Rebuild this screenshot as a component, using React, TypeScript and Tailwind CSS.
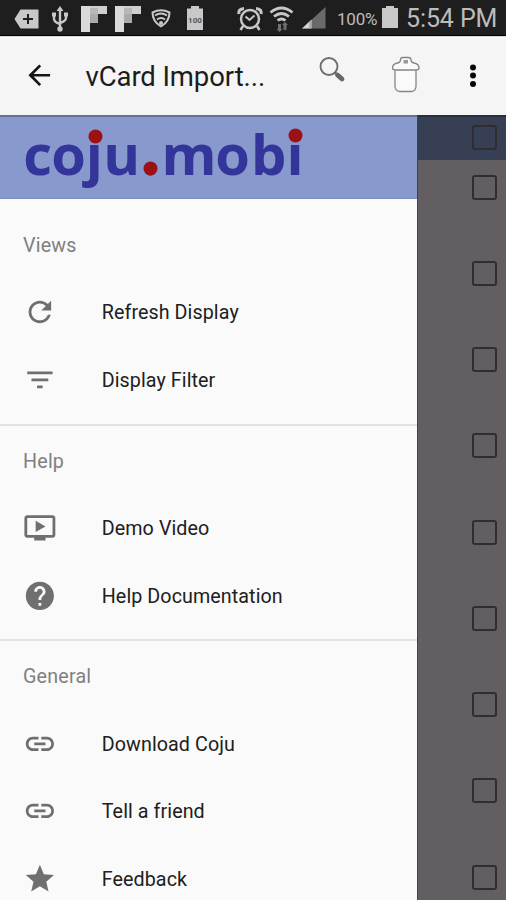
import type { ReactNode } from "react";

function Icon({ d }: { d: string }) {
  return (
    <svg viewBox="0 0 24 24" className="mb-[1.5px] size-[33.75px] shrink-0" fill="#6f6f6f">
      <path d={d} />
    </svg>
  );
}

const refresh =
  "M17.65 6.35C16.2 4.9 14.21 4 12 4c-4.42 0-7.99 3.58-7.99 8s3.57 8 7.99 8c3.73 0 6.84-2.55 7.73-6h-2.08c-.82 2.33-3.04 4-5.65 4-3.31 0-6-2.69-6-6s2.69-6 6-6c1.66 0 3.14.69 4.22 1.78L13 11h7V4z";
const filter = "M10 18h4v-2h-4v2zM3 6v2h18V6H3zm3 7h12v-2H6v2z";
const video =
  "M21 3H3c-1.11 0-2 .89-2 2v12c0 1.1.89 2 2 2h5v2h8v-2h5c1.1 0 1.99-.9 1.99-2L23 5c0-1.11-.9-2-2-2zm0 14H3V5h18v12zm-5-6l-7 4V7z";
const help =
  "M12 2C6.48 2 2 6.48 2 12s4.48 10 10 10 10-4.48 10-10S17.52 2 12 2zm1 17h-2v-2h2v2zm2.07-7.75l-.9.92C13.45 12.9 13 13.5 13 15h-2v-.5c0-1.1.45-2.1 1.17-2.83l1.24-1.26c.37-.36.59-.86.59-1.41 0-1.1-.9-2-2-2s-2 .9-2 2H8c0-2.21 1.79-4 4-4s4 1.79 4 4c0 .88-.36 1.68-.93 2.25z";
const link =
  "M3.9 12c0-1.71 1.39-3.1 3.1-3.1h4V7H7c-2.76 0-5 2.24-5 5s2.24 5 5 5h4v-1.9H7c-1.71 0-3.1-1.39-3.1-3.1zM8 13h8v-2H8v2zm9-6h-4v1.9h4c1.71 0 3.1 1.39 3.1 3.1s-1.39 3.1-3.1 3.1h-4V17h4c2.76 0 5-2.24 5-5s-2.24-5-5-5z";
const star =
  "M12 17.27L18.18 21l-1.64-7.03L22 9.24l-7.19-.61L12 2 9.19 8.63 2 9.24l5.46 4.73L5.82 21z";

const sections = [
  { title: "Views", items: [["Refresh Display", refresh], ["Display Filter", filter]] },
  { title: "Help", items: [["Demo Video", video], ["Help Documentation", help]] },
  { title: "General", items: [["Download Coju", link], ["Tell a friend", link], ["Feedback", star]] },
];

function StatusBar() {
  return (
    <div className="flex h-9 shrink-0 items-center border-b border-black bg-[#1e1e1e] text-[#bcbcbc]">
      <svg width="340" height="35" viewBox="0 0 340 35" fill="#c8c8c8" className="shrink-0">
        <path d="M14.5 19 20.5 9.5H38.500V28.500H20.500Z" />
        <path d="M23 19h10M28 14v10" stroke="#1e1e1e" strokeWidth="2" />
        <g stroke="#c8c8c8" strokeWidth="2.400" fill="none">
          <path d="M60 9v20M54 15v4q0 3 6 5M66 14v4q0 3-6 5" />
        </g>
        <path d="M60 6l3.500 5h-7zM52 12.500h4v4h-4zM64 12.500h4v4h-4z" />
        <circle cx="60" cy="29" r="2.700" />
        <path d="M81 6h9v26h-9z" fill="#dadada" />
        <path d="M90 6h17v8H90z" fill="#cfcfcf" />
        <path d="M90 14h8v9h-8z" fill="#aaa" />
        <path d="M90 8h8v6h-8z" fill="#b8b8b8" />
        <path d="M115 6h9v26h-9z" fill="#dadada" />
        <path d="M124 6h17v8h-17z" fill="#cfcfcf" />
        <path d="M124 14h8v9h-8z" fill="#aaa" />
        <path d="M124 8h8v6h-8z" fill="#b8b8b8" />
        <g stroke="#c8c8c8" strokeWidth="2" fill="none" strokeLinejoin="round">
          <path d="M152.500 12.500Q161 8 169.500 12.500Q169.500 21.500 161 26.500Q152.500 21.500 152.500 12.500Z" />
          <path d="M155 15.500Q161 11.500 167 15.500M157 19.500Q161 16.500 165 19.500" />
        </g>
        <circle cx="161" cy="23" r="2" />
        <path d="M191 6h8v2.500h4V30h-16V8.500h4z" />
        <text x="195" y="22.500" textAnchor="middle" fontSize="8" fontWeight="700" fill="#555" fontFamily="Roboto, sans-serif">100</text>
        <g stroke="#c8c8c8" fill="none">
          <circle cx="250" cy="19" r="9" strokeWidth="2.500" />
          <path d="M245.500 16.500l4 3.500 5-4.500" strokeWidth="2" />
          <path d="M239 14q-1-5 5-5.500M261 14q1-5-5-5.500" strokeWidth="3" />
          <path d="M243 26l-2.500 4M257 26l2.500 4" strokeWidth="2.500" />
          <path d="M270.500 12.500q11-9 22 0M274 16.500q7.500-6 15 0M277.500 20.500q4-3 8 0" strokeWidth="2.800" />
        </g>
        <path d="M278 24h3v5h1.500l-3 3-3-3h1.500zM283.500 30v-5H282l3-3 3 3h-1.500v5z" fill="#6f6f6f" />
        <path d="M325.500 7v21.500H302Z" fill="#6a6a6a" />
        <path d="M311.500 19.500v9H302Z" fill="#d5d5d5" />
        <path d="M310 21v7.500" stroke="#888" strokeWidth="1" />
      </svg>
      <span className="-ml-[3px] w-[45px] shrink-0 whitespace-nowrap pt-[3px] text-[17px] leading-none tracking-[-0.200px]">100%</span>
      <svg width="16" height="24" viewBox="0 0 16 24" fill="#c8c8c8" className="mb-px shrink-0">
        <path d="M4 1h8v2h4v20H0V3h4z" />
      </svg>
      <span className="ml-[8px] whitespace-nowrap pt-[2px] text-[25px] leading-none tracking-[-0.100px]">5:54 PM</span>
    </div>
  );
}

function Toolbar() {
  return (
    <header className="flex h-[79px] shrink-0 items-center border-t border-[#dadada] bg-[#f5f5f5]">
      <svg viewBox="0 0 24 24" className="ml-[23px] mb-px size-[32.500px] shrink-0" fill="#151515">
        <path d="M20 11H7.830l5.590-5.590L12 4l-8 8 8 8 1.410-1.410L7.830 13H20v-2z" />
      </svg>
      <h1 className="ml-[30px] w-[222.500px] whitespace-nowrap pt-[2px] text-[27.500px] leading-none tracking-[-0.100px] text-[#1c1c1c]">vCard Import...</h1>
      <svg width="198" height="78" viewBox="308 37 198 78" className="shrink-0" fill="none">
        <circle cx="329" cy="66.500" r="8.500" stroke="#6e6e6e" strokeWidth="1.900" />
        <path d="M335 72.500l4 4" stroke="#666" strokeWidth="2.400" />
        <path d="M337.500 75l4.500 4" stroke="#666" strokeWidth="4.800" strokeLinecap="round" />
        <g stroke="#858585" strokeWidth="1.300" fill="#fafafa" strokeLinejoin="round">
          <path d="M395 70.500V86q0 5 5 5.500h11.500q4.500-.5 4.500-5.500V70.500" />
          <path d="M392.500 68q0-4 5-5 3-.5 3-3 0-2.500 2.500-2.500h5.500q2.500 0 2.500 2.500 0 2.500 3 3 5 1 5 5 0 2-3 2h-20.500q-3 0-3-2Z" />
        </g>
        <path d="M403.500 60h4.500v3.500h-4.500z" fill="#999" />
        <g fill="#080808">
          <circle cx="473" cy="67.500" r="3" />
          <circle cx="473" cy="75.500" r="3" />
          <circle cx="473" cy="84" r="3" />
        </g>
      </svg>
    </header>
  );
}

function Logo() {
  return (
    <div className="h-[84px] shrink-0 border-b border-t-2 border-b-[#7f90c0] border-t-[#686f99] bg-[#8899cd]">
      <svg width="417" height="81" viewBox="0 117 417 81" className="overflow-visible">
        <text
          x="23.2 51.2 85.7 103.2 142.5 161.500 215.200 251 286.400"
          y="174.500"
          fill="#33359a"
          fontFamily="'Open Sans', sans-serif"
          fontWeight="700"
          fontSize="56"
        >
          coju.mobi
        </text>
        <g fill="#9c1212">
          <circle cx="95.500" cy="136.500" r="7" />
          <circle cx="150.500" cy="168.500" r="7" />
          <circle cx="295.500" cy="135.500" r="7" />
        </g>
      </svg>
    </div>
  );
}

function Section({ title, children, first }: { title: string; children: ReactNode; first: boolean }) {
  return (
    <section className={first ? "pb-[9.900px] pt-[12.500px]" : "border-t-2 border-[#e2e2e2] pb-[9.500px] pt-[1.500px]"}>
      <h2 className="flex h-[67.500px] items-center pl-[23px] pt-px text-[19.700px] tracking-[0.200px] text-[#808080]">{title}</h2>
      {children}
    </section>
  );
}

function Checkbox() {
  return <div className="size-[25px] shrink-0 rounded-[3px] border-[2.500px] border-[#302c30]" />;
}

export default function App() {
  return (
    <div className="flex h-[900px] w-[506px] flex-col overflow-hidden bg-[#fafafa] font-['Roboto',sans-serif]">
      <StatusBar />
      <Toolbar />
      <div className="flex min-h-0 flex-1">
        <nav className="w-[417px] shrink-0 overflow-hidden bg-[#fafafa]">
          <Logo />
          {sections.map((s, i) => (
            <Section key={s.title} title={s.title} first={i === 0}>
              {s.items.map(([label, d]) => (
                <div key={label} className="flex h-[67.500px] items-center pl-[22.500px]">
                  <Icon d={d} />
                  <span className="ml-[45.500px] whitespace-nowrap pt-px text-[19.700px] tracking-[0.080px] text-[#202020]">{label}</span>
                </div>
              ))}
            </Section>
          ))}
        </nav>
        <div className="flex-1 overflow-hidden border-l border-[#454247] bg-[#635e61]">
          <div className="flex h-[45px] justify-end border-t-2 border-[#272e3d] bg-[#373f54] pr-[9px] pt-[8px]">
            <Checkbox />
          </div>
          {Array.from({ length: 9 }, (_, i) => (
            <div key={i} className="flex h-[86.250px] justify-end pr-[9px] pt-[14.500px]">
              <Checkbox />
            </div>
          ))}
        </div>
      </div>
    </div>
  );
}
